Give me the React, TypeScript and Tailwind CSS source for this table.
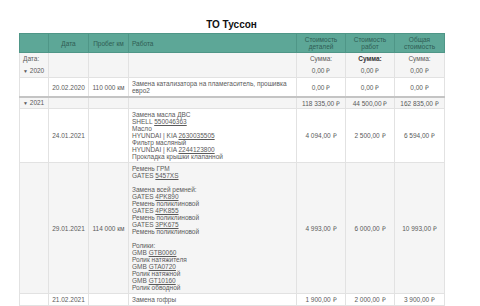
import React from 'react';

interface Part {
    text: string;
    link?: string;
}

interface Entry {
    date: string;
    mileage: string;
    work: (Part | null)[];
    parts: string;
    labor: string;
    total: string;
}

interface Group {
    year: string;
    parts: string;
    labor: string;
    total: string;
    entries: Entry[];
}

const GROUPS: Group[] = [
    {
        year: '2020',
        parts: '0,00 ₽',
        labor: '0,00 ₽',
        total: '0,00 ₽',
        entries: [
            {
                date: '20.02.2020',
                mileage: '110 000 км',
                work: [{ text: 'Замена катализатора на пламегаситель, прошивка евро2' }],
                parts: '0,00 ₽',
                labor: '0,00 ₽',
                total: '0,00 ₽',
            },
        ],
    },
    {
        year: '2021',
        parts: '118 335,00 ₽',
        labor: '44 500,00 ₽',
        total: '162 835,00 ₽',
        entries: [
            {
                date: '24.01.2021',
                mileage: '',
                work: [
                    { text: 'Замена масла ДВС' },
                    { text: 'SHELL ', link: '550046363' },
                    { text: 'Масло' },
                    { text: 'HYUNDAI | KIA ', link: '2630035505' },
                    { text: 'Фильтр масляный' },
                    { text: 'HYUNDAI | KIA ', link: '2244123800' },
                    { text: 'Прокладка крышки клапанной' },
                ],
                parts: '4 094,00 ₽',
                labor: '2 500,00 ₽',
                total: '6 594,00 ₽',
            },
            {
                date: '29.01.2021',
                mileage: '114 000 км',
                work: [
                    { text: 'Ремень ГРМ' },
                    { text: 'GATES ', link: '5457XS' },
                    null,
                    { text: 'Замена всей ремней:' },
                    { text: 'GATES ', link: '4PK890' },
                    { text: 'Ремень поликлиновой' },
                    { text: 'GATES ', link: '4PK855' },
                    { text: 'Ремень поликлиновой' },
                    { text: 'GATES ', link: '3PK675' },
                    { text: 'Ремень поликлиновой' },
                    null,
                    { text: 'Ролики:' },
                    { text: 'GMB ', link: 'GTB0060' },
                    { text: 'Ролик натяжителя' },
                    { text: 'GMB ', link: 'GTA0720' },
                    { text: 'Ролик натяжной' },
                    { text: 'GMB ', link: 'GT10160' },
                    { text: 'Ролик обводной' },
                ],
                parts: '4 993,00 ₽',
                labor: '6 000,00 ₽',
                total: '10 993,00 ₽',
            },
            {
                date: '21.02.2021',
                mileage: '',
                work: [{ text: 'Замена гофры' }],
                parts: '1 900,00 ₽',
                labor: '2 000,00 ₽',
                total: '3 900,00 ₽',
            },
        ],
    },
];

const cell = 'border border-[#e2e2e2] px-[3px] align-middle';
const td = `${cell} py-[2px]`;
const th = 'border border-[#4f9687] px-[3px] py-[2px] font-normal align-middle';

const App = () => {
    return (
        <div className="w-[480px] min-h-[306px] bg-white font-['Liberation_Sans',Arial,sans-serif]">
            <div className="ml-[19px] w-[425px] pt-[19px]">
                <h1 className="text-center text-[10px] leading-[12px] font-bold text-[#111] mb-[2px]">ТО Туссон</h1>
                <table className="w-full table-fixed border-collapse text-[6.5px] leading-[7px] text-[#5a5a5a]">
                    <colgroup>
                        <col className="w-[29px]" />
                        <col className="w-[40px]" />
                        <col className="w-[40px]" />
                        <col className="w-[168px]" />
                        <col className="w-[49px]" />
                        <col className="w-[49px]" />
                        <col className="w-[50px]" />
                    </colgroup>
                    <thead>
                        <tr className="bg-[#5da797] text-[#2f5d54] h-[19px]">
                            <th className={th}></th>
                            <th className={`${th} text-center`}>Дата</th>
                            <th className={`${th} text-center`}>Пробег км</th>
                            <th className={`${th} text-left`}>Работа</th>
                            <th className={`${th} text-center`}>Стоимость<br />деталей</th>
                            <th className={`${th} text-center`}>Стоимость<br />работ</th>
                            <th className={`${th} text-center`}>Общая<br />стоимость</th>
                        </tr>
                    </thead>
                    <tbody>
                        {GROUPS.map((group, gi) => (
                            <React.Fragment key={group.year}>
                                {gi === 0 ? (
                                    <tr className="bg-[#f5f5f5] leading-[12px]">
                                        <td className={`${cell} py-0 whitespace-nowrap`}>
                                            <div>Дата:</div>
                                            <div><span className="text-[5px] leading-[12px]">▼</span> {group.year}</div>
                                        </td>
                                        <td className={`${cell} py-0`}></td>
                                        <td className={`${cell} py-0`}></td>
                                        <td className={`${cell} py-0`}></td>
                                        {[group.parts, group.labor, group.total].map((v, i) => (
                                            <td key={i} className={`${cell} py-0 text-center`}>
                                                <div className={i === 1 ? 'text-[#333] font-bold' : ''}>Сумма:</div>
                                                <div>{v}</div>
                                            </td>
                                        ))}
                                    </tr>
                                ) : (
                                    <tr className="bg-[#f5f5f5] border-t-2 border-t-[#c4c4c4]">
                                        <td className={`${cell} py-[1px] whitespace-nowrap`}>
                                            <span className="text-[5px] leading-[7px]">▼</span> {group.year}
                                        </td>
                                        <td className={`${cell} py-[1px]`}></td>
                                        <td className={`${cell} py-[1px]`}></td>
                                        <td className={`${cell} py-[1px]`}></td>
                                        <td className={`${cell} py-[1px] text-center`}>{group.parts}</td>
                                        <td className={`${cell} py-[1px] text-center`}>{group.labor}</td>
                                        <td className={`${cell} py-[1px] text-center`}>{group.total}</td>
                                    </tr>
                                )}
                                {group.entries.map((e, ei) => (
                                    <tr key={e.date} className={ei % 2 === 1 ? 'bg-[#f5f5f5]' : 'bg-white'}>
                                        <td className={td}></td>
                                        <td className={`${td} text-center`}>{e.date}</td>
                                        <td className={`${td} text-center`}>{e.mileage}</td>
                                        <td className={td}>
                                            {e.work.map((p, pi) =>
                                                p === null ? (
                                                    <div key={pi} className="h-[7px]"></div>
                                                ) : (
                                                    <div key={pi}>
                                                        {p.text}
                                                        {p.link && <span className="underline">{p.link}</span>}
                                                    </div>
                                                )
                                            )}
                                        </td>
                                        <td className={`${td} text-center`}>{e.parts}</td>
                                        <td className={`${td} text-center`}>{e.labor}</td>
                                        <td className={`${td} text-center`}>{e.total}</td>
                                    </tr>
                                ))}
                            </React.Fragment>
                        ))}
                    </tbody>
                </table>
            </div>
        </div>
    );
};

export default App;
